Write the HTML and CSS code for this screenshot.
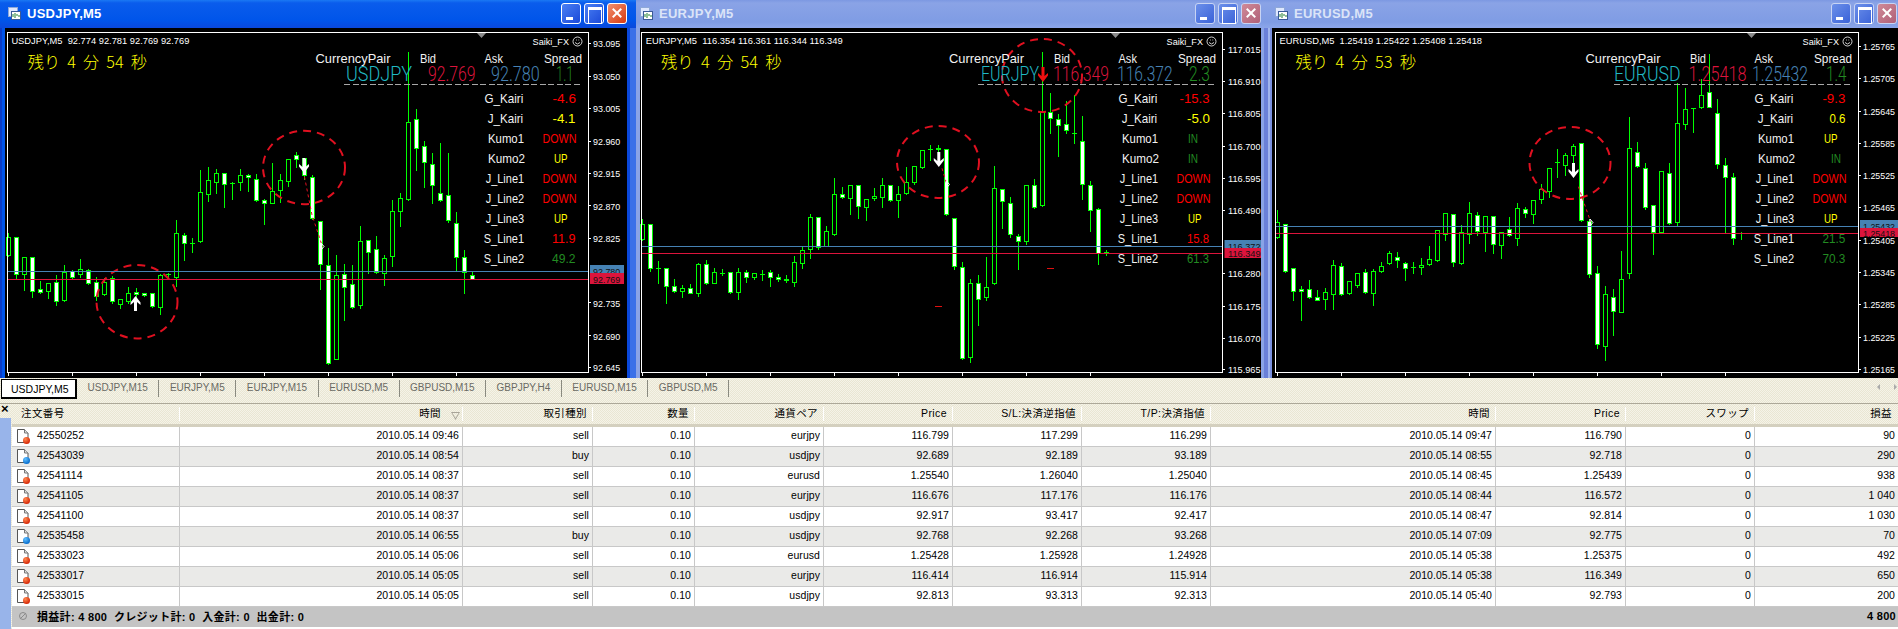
FILE: index.html
```html
<!DOCTYPE html>
<html lang="ja">
<head>
<meta charset="utf-8">
<title>MetaTrader charts</title>
<link rel="stylesheet" href="styles.css">
</head>
<body>
<main class="charts">
  <section class="win active w1">
    <header class="titlebar">
      <svg class="wicon" viewBox="0 0 13 13"><rect x="0.5" y="0.5" width="9" height="9" fill="#dfe8ff" stroke="#8fa8d8"/><rect x="3.5" y="4.5" width="9" height="8" fill="#fff" stroke="#3a5a98"/><path d="M5 10V7M7 11V6M9 9V7M11 10V8" stroke="#208030"/></svg>
      <span class="wtitle">USDJPY,M5</span>
      <div class="btns"><span class="btn bmin"></span><span class="btn bmax"></span><span class="btn bclose"></span></div>
    </header>
    <div class="chartwrap">
      <svg class="chart" viewBox="5 28 622 350">
        <g class="candles" data-chart="0"></g>
        <ellipse class="ring" cx="304" cy="167.5" rx="41" ry="36.7"/>
        <ellipse class="ring" cx="137" cy="301.7" rx="40.5" ry="36.7"/>
        <path class="trend" d="M304.5 176.7L312 215L322.5 246.7"/>
        <path class="marker" d="M321 243v7l3-3.5z"/>
        <path class="arrow" transform="translate(304 158)" d="M-1.5 0h3v9l3.5-3v2.500L0 15l-5-6.500v-2.500l3.500 3z"/>
        <path class="arrow" transform="translate(135.500 311) scale(1 -1)" d="M-1.500 0h3v9l3.500-3v2.500L0 15l-5-6.500v-2.500l3.500 3z"/>
        <path class="pline blue" d="M8 271.500H588"/>
        <path class="pline red" d="M8 279.500H588"/>
        <path class="frame" d="M7.500 372.500V32.500H588.500V372.500z"/>
        <path class="gtri" d="M477 33h9l-4.500 5z"/>
        <path class="frame" d="M588 43.500h3M588 76.500h3M588 108.500h3M588 141.500h3M588 173.500h3M588 205.500h3M588 238.500h3M588 302.500h3M588 335.500h3M588 367.500h3"/>
        <text class="hd" x="11.400" y="44" textLength="178" lengthAdjust="spacingAndGlyphs">USDJPY,M5  92.774 92.781 92.769 92.769</text>
        <text class="hd" x="532.600" y="45" textLength="36.400" lengthAdjust="spacingAndGlyphs">Saiki_FX</text>
        <g class="smile"><circle cx="577.500" cy="41.500" r="4.500"/><path d="M575 42.500q2.500 3 5 0M576 40h.8M578.400 40h.8"/></g>
        <text class="timer" x="27.800" y="68" textLength="119" lengthAdjust="spacingAndGlyphs">残り  4  分  54  秒</text>
        <text class="lb" x="315.500" y="63" textLength="75" lengthAdjust="spacingAndGlyphs">CurrencyPair</text>
        <text class="lb" x="420" y="63" textLength="16" lengthAdjust="spacingAndGlyphs">Bid</text>
        <text class="lb" x="484.500" y="63" textLength="18.400" lengthAdjust="spacingAndGlyphs">Ask</text>
        <text class="lb" x="544" y="63" textLength="38" lengthAdjust="spacingAndGlyphs">Spread</text>
        <text class="big cy" x="346" y="80.500" textLength="66" lengthAdjust="spacingAndGlyphs">USDJPY</text>
        <text class="big cr" x="428" y="80.500" textLength="47.500" lengthAdjust="spacingAndGlyphs">92.769</text>
        <text class="big sb" x="491" y="80.500" textLength="48.600" lengthAdjust="spacingAndGlyphs">92.780</text>
        <text class="big fg" x="556" y="80.500" textLength="17.500" lengthAdjust="spacingAndGlyphs">1.1</text>
        <path class="dash" d="M344 84.500H580"/>
        <text class="lb" x="484.500" y="103" textLength="38.800" lengthAdjust="spacingAndGlyphs">G_Kairi</text>
        <text class="lb" x="487.800" y="123" textLength="35.400" lengthAdjust="spacingAndGlyphs">J_Kairi</text>
        <text class="lb" x="488" y="143" textLength="36" lengthAdjust="spacingAndGlyphs">Kumo1</text>
        <text class="lb" x="488" y="163" textLength="37" lengthAdjust="spacingAndGlyphs">Kumo2</text>
        <text class="lb" x="485.700" y="183" textLength="38.400" lengthAdjust="spacingAndGlyphs">J_Line1</text>
        <text class="lb" x="485.700" y="203" textLength="38.400" lengthAdjust="spacingAndGlyphs">J_Line2</text>
        <text class="lb" x="485.700" y="223" textLength="38.400" lengthAdjust="spacingAndGlyphs">J_Line3</text>
        <text class="lb" x="483.700" y="243" textLength="40.400" lengthAdjust="spacingAndGlyphs">S_Line1</text>
        <text class="lb" x="483.700" y="263" textLength="40.400" lengthAdjust="spacingAndGlyphs">S_Line2</text>
        <text class="lb vr" x="552.500" y="103" textLength="23.500" lengthAdjust="spacingAndGlyphs">-4.6</text>
        <text class="lb vy" x="552.500" y="123" textLength="23" lengthAdjust="spacingAndGlyphs">-4.1</text>
        <text class="lb vr" x="542.500" y="143" textLength="34" lengthAdjust="spacingAndGlyphs">DOWN</text>
        <text class="lb vy" x="554" y="163" textLength="13.500" lengthAdjust="spacingAndGlyphs">UP</text>
        <text class="lb vr" x="542.500" y="183" textLength="34" lengthAdjust="spacingAndGlyphs">DOWN</text>
        <text class="lb vr" x="542.500" y="203" textLength="34" lengthAdjust="spacingAndGlyphs">DOWN</text>
        <text class="lb vy" x="554" y="223" textLength="13.500" lengthAdjust="spacingAndGlyphs">UP</text>
        <text class="lb vr" x="552" y="243" textLength="23.500" lengthAdjust="spacingAndGlyphs">11.9</text>
        <text class="lb vg" x="552" y="263" textLength="23.500" lengthAdjust="spacingAndGlyphs">49.2</text>
        <text class="ax" x="593" y="47" textLength="27.300" lengthAdjust="spacingAndGlyphs">93.095</text>
        <text class="ax" x="593" y="80" textLength="27.300" lengthAdjust="spacingAndGlyphs">93.050</text>
        <text class="ax" x="593" y="112" textLength="27.300" lengthAdjust="spacingAndGlyphs">93.005</text>
        <text class="ax" x="593" y="144.500" textLength="27.300" lengthAdjust="spacingAndGlyphs">92.960</text>
        <text class="ax" x="593" y="177" textLength="27.300" lengthAdjust="spacingAndGlyphs">92.915</text>
        <text class="ax" x="593" y="209.500" textLength="27.300" lengthAdjust="spacingAndGlyphs">92.870</text>
        <text class="ax" x="593" y="242" textLength="27.300" lengthAdjust="spacingAndGlyphs">92.825</text>
        <text class="ax" x="593" y="306.500" textLength="27.300" lengthAdjust="spacingAndGlyphs">92.735</text>
        <text class="ax" x="593" y="339.500" textLength="27.300" lengthAdjust="spacingAndGlyphs">92.690</text>
        <text class="ax" x="593" y="371" textLength="27.300" lengthAdjust="spacingAndGlyphs">92.645</text>
        <rect class="tagb" x="590" y="265" width="34" height="8"/>
        <text class="tagt" x="593" y="274.500" textLength="27.300" lengthAdjust="spacingAndGlyphs">92.780</text>
        <rect class="tagr" x="590" y="273" width="34" height="11"/>
        <text class="tagt" x="593" y="282.500" textLength="27.300" lengthAdjust="spacingAndGlyphs">92.769</text>
      </svg>
    </div>
  </section>

  <section class="win w2">
    <header class="titlebar">
      <svg class="wicon" viewBox="0 0 13 13"><rect x="0.5" y="0.5" width="9" height="9" fill="#dfe8ff" stroke="#8fa8d8"/><rect x="3.5" y="4.5" width="9" height="8" fill="#fff" stroke="#3a5a98"/><path d="M5 10V7M7 11V6M9 9V7M11 10V8" stroke="#208030"/></svg>
      <span class="wtitle">EURJPY,M5</span>
      <div class="btns"><span class="btn bmin"></span><span class="btn bmax"></span><span class="btn bclose"></span></div>
    </header>
    <div class="chartwrap">
      <svg class="chart" viewBox="6 28 621 350">
        <g class="candles" data-chart="1"></g>
        <ellipse class="ring" cx="304" cy="162" rx="41" ry="36"/>
        <ellipse class="ring" cx="408" cy="75.500" rx="40" ry="36.500"/>
        <path class="trend" d="M308 168.300L313 185"/>
        <path class="marker" d="M312.500 181v7l3-3.500z"/>
        <path class="arrow" transform="translate(304.800 152)" d="M-1.500 0h3v9l3.500-3v2.500L0 15l-5-6.500v-2.500l3.500 3z"/>
        <path class="arrow arrow-red" transform="translate(409 67)" d="M-1.500 0h3v9l3.500-3v2.500L0 15l-5-6.500v-2.500l3.500 3z"/>
        <path class="ticky" d="M412.500 268.500h7M301 306.500h7"/>
        <path class="pline blue" d="M8 246.500H588"/>
        <path class="pline red" d="M8 253.500H588"/>
        <path class="frame" d="M7.500 372.500V32.500H588.500V372.500z"/>
        <path class="gtri" d="M477 33h9l-4.500 5z"/>
        <path class="frame" d="M588 49.500h3M588 81.500h3M588 113.500h3M588 146.500h3M588 178.500h3M588 210.500h3M588 273.500h3M588 306.500h3M588 338.500h3M588 369.500h3"/>
        <text class="hd" x="11.700" y="44" textLength="197" lengthAdjust="spacingAndGlyphs">EURJPY,M5  116.354 116.361 116.344 116.349</text>
        <text class="hd" x="532.600" y="45" textLength="36.400" lengthAdjust="spacingAndGlyphs">Saiki_FX</text>
        <g class="smile"><circle cx="577.500" cy="41.500" r="4.500"/><path d="M575 42.500q2.500 3 5 0M576 40h.8M578.400 40h.8"/></g>
        <text class="timer" x="27" y="68" textLength="120.600" lengthAdjust="spacingAndGlyphs">残り  4  分  54  秒</text>
        <text class="lb" x="315" y="63" textLength="75" lengthAdjust="spacingAndGlyphs">CurrencyPair</text>
        <text class="lb" x="420" y="63" textLength="16" lengthAdjust="spacingAndGlyphs">Bid</text>
        <text class="lb" x="484.500" y="63" textLength="18.400" lengthAdjust="spacingAndGlyphs">Ask</text>
        <text class="lb" x="544" y="63" textLength="38" lengthAdjust="spacingAndGlyphs">Spread</text>
        <text class="big cy" x="347" y="80.500" textLength="58" lengthAdjust="spacingAndGlyphs">EURJPY</text>
        <text class="big cr" x="419" y="80.500" textLength="56" lengthAdjust="spacingAndGlyphs">116.349</text>
        <text class="big sb" x="483" y="80.500" textLength="55.600" lengthAdjust="spacingAndGlyphs">116.372</text>
        <text class="big fg" x="555" y="80.500" textLength="21" lengthAdjust="spacingAndGlyphs">2.3</text>
        <path class="dash" d="M344 84.500H580"/>
        <text class="lb" x="484.500" y="103" textLength="38.800" lengthAdjust="spacingAndGlyphs">G_Kairi</text>
        <text class="lb" x="487.800" y="123" textLength="35.400" lengthAdjust="spacingAndGlyphs">J_Kairi</text>
        <text class="lb" x="488" y="143" textLength="36" lengthAdjust="spacingAndGlyphs">Kumo1</text>
        <text class="lb" x="488" y="163" textLength="37" lengthAdjust="spacingAndGlyphs">Kumo2</text>
        <text class="lb" x="485.700" y="183" textLength="38.400" lengthAdjust="spacingAndGlyphs">J_Line1</text>
        <text class="lb" x="485.700" y="203" textLength="38.400" lengthAdjust="spacingAndGlyphs">J_Line2</text>
        <text class="lb" x="485.700" y="223" textLength="38.400" lengthAdjust="spacingAndGlyphs">J_Line3</text>
        <text class="lb" x="483.700" y="243" textLength="40.400" lengthAdjust="spacingAndGlyphs">S_Line1</text>
        <text class="lb" x="483.700" y="263" textLength="40.400" lengthAdjust="spacingAndGlyphs">S_Line2</text>
        <text class="lb vr" x="545.600" y="103" textLength="30" lengthAdjust="spacingAndGlyphs">-15.3</text>
        <text class="lb vy" x="553" y="123" textLength="23" lengthAdjust="spacingAndGlyphs">-5.0</text>
        <text class="lb vg" x="554" y="143" textLength="10" lengthAdjust="spacingAndGlyphs">IN</text>
        <text class="lb vg" x="554" y="163" textLength="10" lengthAdjust="spacingAndGlyphs">IN</text>
        <text class="lb vr" x="542.500" y="183" textLength="34" lengthAdjust="spacingAndGlyphs">DOWN</text>
        <text class="lb vr" x="542.500" y="203" textLength="34" lengthAdjust="spacingAndGlyphs">DOWN</text>
        <text class="lb vy" x="554" y="223" textLength="13.500" lengthAdjust="spacingAndGlyphs">UP</text>
        <text class="lb vr" x="553" y="243" textLength="22" lengthAdjust="spacingAndGlyphs">15.8</text>
        <text class="lb vg" x="553" y="263" textLength="22" lengthAdjust="spacingAndGlyphs">61.3</text>
        <text class="ax" x="594" y="53" textLength="32.600" lengthAdjust="spacingAndGlyphs">117.015</text>
        <text class="ax" x="594" y="85" textLength="32.600" lengthAdjust="spacingAndGlyphs">116.910</text>
        <text class="ax" x="594" y="117" textLength="32.600" lengthAdjust="spacingAndGlyphs">116.805</text>
        <text class="ax" x="594" y="149.500" textLength="32.600" lengthAdjust="spacingAndGlyphs">116.700</text>
        <text class="ax" x="594" y="181.500" textLength="32.600" lengthAdjust="spacingAndGlyphs">116.595</text>
        <text class="ax" x="594" y="213.500" textLength="32.600" lengthAdjust="spacingAndGlyphs">116.490</text>
        <text class="ax" x="594" y="245.500" textLength="32.600" lengthAdjust="spacingAndGlyphs">116.385</text>
        <text class="ax" x="594" y="276.500" textLength="32.600" lengthAdjust="spacingAndGlyphs">116.280</text>
        <text class="ax" x="594" y="309.500" textLength="32.600" lengthAdjust="spacingAndGlyphs">116.175</text>
        <text class="ax" x="594" y="341.500" textLength="32.600" lengthAdjust="spacingAndGlyphs">116.070</text>
        <text class="ax" x="594" y="372.500" textLength="32.600" lengthAdjust="spacingAndGlyphs">115.965</text>
        <rect class="tagb" x="590.500" y="240" width="36.500" height="8"/>
        <text class="tagt" x="594" y="249.500" textLength="32.600" lengthAdjust="spacingAndGlyphs">116.372</text>
        <rect class="tagr" x="590.500" y="248" width="36.500" height="10"/>
        <text class="tagt" x="594" y="256.500" textLength="32.600" lengthAdjust="spacingAndGlyphs">116.349</text>
      </svg>
    </div>
  </section>

  <section class="win w3">
    <header class="titlebar">
      <svg class="wicon" viewBox="0 0 13 13"><rect x="0.5" y="0.5" width="9" height="9" fill="#dfe8ff" stroke="#8fa8d8"/><rect x="3.5" y="4.5" width="9" height="8" fill="#fff" stroke="#3a5a98"/><path d="M5 10V7M7 11V6M9 9V7M11 10V8" stroke="#208030"/></svg>
      <span class="wtitle">EURUSD,M5</span>
      <div class="btns"><span class="btn bmin"></span><span class="btn bmax"></span><span class="btn bclose"></span></div>
    </header>
    <div class="chartwrap">
      <svg class="chart" viewBox="2 28 626 350">
        <g class="candles" data-chart="2"></g>
        <ellipse class="ring" cx="300" cy="163" rx="40.500" ry="36"/>
        <path class="trend" d="M308.400 186.700L320.600 221.700"/>
        <path class="marker" d="M320 219v7l3-3.500z"/>
        <path class="arrow" transform="translate(303.500 163)" d="M-1.500 0h3v9l3.500-3v2.500L0 15l-5-6.500v-2.500l3.500 3z"/>
        <path class="pline blue" d="M6 226.500H588"/>
        <path class="pline red" d="M6 233.500H588"/>
        <path class="frame" d="M5.500 372.500V32.500H588.500V372.500z"/>
        <path class="gtri" d="M477 33h9l-4.500 5z"/>
        <path class="frame" d="M588 46.500h3M588 78.500h3M588 111.500h3M588 143.500h3M588 175.500h3M588 207.500h3M588 240.500h3M588 272.500h3M588 304.500h3M588 337.500h3M588 369.500h3"/>
        <text class="hd" x="9.600" y="44" textLength="202.400" lengthAdjust="spacingAndGlyphs">EURUSD,M5  1.25419 1.25422 1.25408 1.25418</text>
        <text class="hd" x="532.600" y="45" textLength="36.400" lengthAdjust="spacingAndGlyphs">Saiki_FX</text>
        <g class="smile"><circle cx="577.500" cy="41.500" r="4.500"/><path d="M575 42.500q2.500 3 5 0M576 40h.8M578.400 40h.8"/></g>
        <text class="timer" x="25.500" y="68" textLength="120.500" lengthAdjust="spacingAndGlyphs">残り  4  分  53  秒</text>
        <text class="lb" x="315.500" y="63" textLength="75" lengthAdjust="spacingAndGlyphs">CurrencyPair</text>
        <text class="lb" x="420" y="63" textLength="16" lengthAdjust="spacingAndGlyphs">Bid</text>
        <text class="lb" x="484.500" y="63" textLength="18.400" lengthAdjust="spacingAndGlyphs">Ask</text>
        <text class="lb" x="544" y="63" textLength="38" lengthAdjust="spacingAndGlyphs">Spread</text>
        <text class="big cy" x="344" y="80.500" textLength="66.600" lengthAdjust="spacingAndGlyphs">EURUSD</text>
        <text class="big cr" x="418.600" y="80.500" textLength="58" lengthAdjust="spacingAndGlyphs">1.25418</text>
        <text class="big sb" x="482" y="80.500" textLength="56" lengthAdjust="spacingAndGlyphs">1.25432</text>
        <text class="big fg" x="556" y="80.500" textLength="20.500" lengthAdjust="spacingAndGlyphs">1.4</text>
        <path class="dash" d="M344 84.500H580"/>
        <text class="lb" x="484.500" y="103" textLength="38.800" lengthAdjust="spacingAndGlyphs">G_Kairi</text>
        <text class="lb" x="487.800" y="123" textLength="35.400" lengthAdjust="spacingAndGlyphs">J_Kairi</text>
        <text class="lb" x="488" y="143" textLength="36" lengthAdjust="spacingAndGlyphs">Kumo1</text>
        <text class="lb" x="488" y="163" textLength="37" lengthAdjust="spacingAndGlyphs">Kumo2</text>
        <text class="lb" x="485.700" y="183" textLength="38.400" lengthAdjust="spacingAndGlyphs">J_Line1</text>
        <text class="lb" x="485.700" y="203" textLength="38.400" lengthAdjust="spacingAndGlyphs">J_Line2</text>
        <text class="lb" x="485.700" y="223" textLength="38.400" lengthAdjust="spacingAndGlyphs">J_Line3</text>
        <text class="lb" x="483.700" y="243" textLength="40.400" lengthAdjust="spacingAndGlyphs">S_Line1</text>
        <text class="lb" x="483.700" y="263" textLength="40.400" lengthAdjust="spacingAndGlyphs">S_Line2</text>
        <text class="lb vr" x="552.400" y="103" textLength="23" lengthAdjust="spacingAndGlyphs">-9.3</text>
        <text class="lb vy" x="559.400" y="123" textLength="16" lengthAdjust="spacingAndGlyphs">0.6</text>
        <text class="lb vy" x="554" y="143" textLength="13.500" lengthAdjust="spacingAndGlyphs">UP</text>
        <text class="lb vg" x="561" y="163" textLength="10" lengthAdjust="spacingAndGlyphs">IN</text>
        <text class="lb vr" x="542.500" y="183" textLength="34" lengthAdjust="spacingAndGlyphs">DOWN</text>
        <text class="lb vr" x="542.500" y="203" textLength="34" lengthAdjust="spacingAndGlyphs">DOWN</text>
        <text class="lb vy" x="554" y="223" textLength="13.500" lengthAdjust="spacingAndGlyphs">UP</text>
        <text class="lb vg" x="552.400" y="243" textLength="23" lengthAdjust="spacingAndGlyphs">21.5</text>
        <text class="lb vg" x="552.400" y="263" textLength="23" lengthAdjust="spacingAndGlyphs">70.3</text>
        <text class="ax" x="593" y="50" textLength="32" lengthAdjust="spacingAndGlyphs">1.25765</text>
        <text class="ax" x="593" y="82" textLength="32" lengthAdjust="spacingAndGlyphs">1.25705</text>
        <text class="ax" x="593" y="114.500" textLength="32" lengthAdjust="spacingAndGlyphs">1.25645</text>
        <text class="ax" x="593" y="146.500" textLength="32" lengthAdjust="spacingAndGlyphs">1.25585</text>
        <text class="ax" x="593" y="178.500" textLength="32" lengthAdjust="spacingAndGlyphs">1.25525</text>
        <text class="ax" x="593" y="210.500" textLength="32" lengthAdjust="spacingAndGlyphs">1.25465</text>
        <text class="ax" x="593" y="243.500" textLength="32" lengthAdjust="spacingAndGlyphs">1.25405</text>
        <text class="ax" x="593" y="275.500" textLength="32" lengthAdjust="spacingAndGlyphs">1.25345</text>
        <text class="ax" x="593" y="307.500" textLength="32" lengthAdjust="spacingAndGlyphs">1.25285</text>
        <text class="ax" x="593" y="340.500" textLength="32" lengthAdjust="spacingAndGlyphs">1.25225</text>
        <text class="ax" x="593" y="372.500" textLength="32" lengthAdjust="spacingAndGlyphs">1.25165</text>
        <rect class="tagb" x="590" y="220" width="38" height="8"/>
        <text class="tagt" x="593" y="229.500" textLength="32" lengthAdjust="spacingAndGlyphs">1.25432</text>
        <rect class="tagr" x="590" y="228" width="38" height="9"/>
        <text class="tagt" x="593" y="236.500" textLength="32" lengthAdjust="spacingAndGlyphs">1.25418</text>
      </svg>
    </div>
  </section>
</main>

<nav class="tabs">
  <span class="tab on">USDJPY,M5</span>
  <span class="tab">USDJPY,M15</span>
  <span class="tab">EURJPY,M5</span>
  <span class="tab">EURJPY,M15</span>
  <span class="tab">EURUSD,M5</span>
  <span class="tab">GBPUSD,M15</span>
  <span class="tab">GBPJPY,H4</span>
  <span class="tab">EURUSD,M15</span>
  <span class="tab">GBPUSD,M5</span>
  <span class="scroll"><i class="tl"></i><i class="tr"></i></span>
</nav>

<svg class="defs" width="0" height="0">
  <symbol id="doc" viewBox="0 0 14 16">
    <path d="M1.500 1.500h7l3.500 3.500v9.500h-10.500z" fill="#fff" stroke="#555"/>
    <path d="M8.500 1.500v3.500h3.500" fill="#ddd" stroke="#777"/>
  </symbol>
</svg>

<div class="terminal">
  <aside class="side"><b class="closex">×</b><div class="sidefill"></div></aside>
  <table class="orders">
    <colgroup><col class="c1"><col class="c2"><col class="c3"><col class="c4"><col class="c5"><col class="c6"><col class="c7"><col class="c8"><col class="c9"><col class="c10"><col class="c11"><col class="c12"></colgroup>
    <thead>
      <tr><th class="first">注文番号</th><th class="sorted">時間<i class="sort"></i></th><th>取引種別</th><th>数量</th><th>通貨ペア</th><th>Price</th><th>S/L:決済逆指値</th><th>T/P:決済指値</th><th>時間</th><th>Price</th><th>スワップ</th><th>損益</th></tr>
    </thead>
    <tbody>
      <tr><td class="id"><svg class="dic"><use href="#doc"/></svg><i class="ball sell"></i>42550252</td><td>2010.05.14 09:46</td><td>sell</td><td>0.10</td><td>eurjpy</td><td>116.799</td><td>117.299</td><td>116.299</td><td>2010.05.14 09:47</td><td>116.790</td><td>0</td><td>90</td></tr>
      <tr><td class="id"><svg class="dic"><use href="#doc"/></svg><i class="ball buy"></i>42543039</td><td>2010.05.14 08:54</td><td>buy</td><td>0.10</td><td>usdjpy</td><td>92.689</td><td>92.189</td><td>93.189</td><td>2010.05.14 08:55</td><td>92.718</td><td>0</td><td>290</td></tr>
      <tr><td class="id"><svg class="dic"><use href="#doc"/></svg><i class="ball sell"></i>42541114</td><td>2010.05.14 08:37</td><td>sell</td><td>0.10</td><td>eurusd</td><td>1.25540</td><td>1.26040</td><td>1.25040</td><td>2010.05.14 08:45</td><td>1.25439</td><td>0</td><td>938</td></tr>
      <tr><td class="id"><svg class="dic"><use href="#doc"/></svg><i class="ball sell"></i>42541105</td><td>2010.05.14 08:37</td><td>sell</td><td>0.10</td><td>eurjpy</td><td>116.676</td><td>117.176</td><td>116.176</td><td>2010.05.14 08:44</td><td>116.572</td><td>0</td><td>1 040</td></tr>
      <tr><td class="id"><svg class="dic"><use href="#doc"/></svg><i class="ball sell"></i>42541100</td><td>2010.05.14 08:37</td><td>sell</td><td>0.10</td><td>usdjpy</td><td>92.917</td><td>93.417</td><td>92.417</td><td>2010.05.14 08:47</td><td>92.814</td><td>0</td><td>1 030</td></tr>
      <tr><td class="id"><svg class="dic"><use href="#doc"/></svg><i class="ball buy"></i>42535458</td><td>2010.05.14 06:55</td><td>buy</td><td>0.10</td><td>usdjpy</td><td>92.768</td><td>92.268</td><td>93.268</td><td>2010.05.14 07:09</td><td>92.775</td><td>0</td><td>70</td></tr>
      <tr><td class="id"><svg class="dic"><use href="#doc"/></svg><i class="ball sell"></i>42533023</td><td>2010.05.14 05:06</td><td>sell</td><td>0.10</td><td>eurusd</td><td>1.25428</td><td>1.25928</td><td>1.24928</td><td>2010.05.14 05:38</td><td>1.25375</td><td>0</td><td>492</td></tr>
      <tr><td class="id"><svg class="dic"><use href="#doc"/></svg><i class="ball sell"></i>42533017</td><td>2010.05.14 05:05</td><td>sell</td><td>0.10</td><td>eurjpy</td><td>116.414</td><td>116.914</td><td>115.914</td><td>2010.05.14 05:38</td><td>116.349</td><td>0</td><td>650</td></tr>
      <tr><td class="id"><svg class="dic"><use href="#doc"/></svg><i class="ball sell"></i>42533015</td><td>2010.05.14 05:05</td><td>sell</td><td>0.10</td><td>usdjpy</td><td>92.813</td><td>93.313</td><td>92.313</td><td>2010.05.14 05:40</td><td>92.793</td><td>0</td><td>200</td></tr>
    </tbody>
    <tfoot>
      <tr><td colspan="11" class="sum"><i class="noicon"></i>損益計: 4 800&nbsp;&nbsp;クレジット計: 0&nbsp;&nbsp;入金計: 0&nbsp;&nbsp;出金計: 0</td><td class="total">4 800</td></tr>
    </tfoot>
  </table>
</div>
<script src="candles.js"></script>
</body>
</html>
```
FILE: styles.css
```css
* { box-sizing: border-box; }
html, body { margin: 0; padding: 0; background: #fff; }
body { width: 1898px; height: 629px; overflow: hidden; font-family: "Liberation Sans", "Noto Sans CJK JP", sans-serif; }

.charts { display: flex; height: 378px; }
.win { display: flex; flex-direction: column; height: 378px; overflow: hidden; }
.w1 { width: 636px; }
.w2 { width: 630px; }
.w3 { width: 632px; }

.titlebar { height: 28px; display: flex; align-items: center; background: linear-gradient(#7c98e2 0, #8aa3e6 3px, #7f9ce4 22px, #8ca6ea 28px); }
.active .titlebar { background: linear-gradient(#1a78f4 0, #0a5cec 3px, #0055ea 20px, #0a48dc 28px); }
.w1 .titlebar { padding: 0 9px 2px 8px; }
.w2 .titlebar { padding: 0 5px 2px 4px; }
.w3 .titlebar { padding: 0 1px 2px 9px; }
.wicon { width: 13px; height: 13px; margin-right: 6px; flex: none; }
.wtitle { font-size: 13px; font-weight: 700; color: #dbe4f8; letter-spacing: .02em; }
.active .wtitle { color: #fff; }
.btns { margin-left: auto; display: flex; gap: 3px; }
.btn { position: relative; display: block; width: 20px; height: 21px; border: 1px solid #c8d4f4; border-radius: 3px; background: linear-gradient(135deg, #6c90ea, #3a62d8); }
.active .btn { border-color: #fff; background: linear-gradient(135deg, #4a80f4, #1a48d8); }
.bclose { background: linear-gradient(135deg, #d08a98, #b06078); }
.active .bclose { background: linear-gradient(135deg, #f09070, #d83a10); }
.bmin::after { content: ""; position: absolute; left: 4px; bottom: 3px; width: 7px; height: 3px; background: #fff; }
.bmax::after { content: ""; position: absolute; left: 3px; top: 3px; width: 12px; height: 13px; border: 1px solid #fff; border-top-width: 3px; }
.bclose::before, .bclose::after { content: ""; position: absolute; left: 3px; top: 8px; width: 12px; height: 2px; background: #fff; transform: rotate(45deg); }
.bclose::after { transform: rotate(-45deg); }

.chartwrap { flex: 1; display: flex; background: #000; }
.w1 .chartwrap { background: linear-gradient(90deg, #0a3cc8 0 2px, #0055ea 2px 5px, #000 5px 627px, #0a48dc 627px 630px, #3a70e8 630px 636px); padding-left: 5px; }
.w2 .chartwrap { background: linear-gradient(90deg, #8aa3e6 0 4px, #000 4px 625px, #8aa3e6 625px 628px, #6a80d8 628px 630px); padding-left: 4px; }
.w3 .chartwrap { background: linear-gradient(90deg, #6a80d8 0 2px, #a0b4ec 2px 4px, #7a90de 4px 6px, #000 6px); padding-left: 6px; }
.chart { display: block; height: 350px; background: #000; flex: none; font-family: "Liberation Sans", "Noto Sans CJK JP", sans-serif; }
.w1 .chart { width: 622px; }
.w2 .chart { width: 621px; }
.w3 .chart { width: 626px; }

.wick { stroke: #00ff00; fill: none; stroke-width: 1; shape-rendering: crispEdges; }
.up { stroke: #00ff00; fill: #000; stroke-width: 1; shape-rendering: crispEdges; }
.dn { stroke: #00ff00; fill: #fff; stroke-width: 1; shape-rendering: crispEdges; }
.tick { stroke: #fff; stroke-width: 1; shape-rendering: crispEdges; fill: none; }
.frame { stroke: #fff; stroke-width: 1; fill: none; shape-rendering: crispEdges; }
.ring { fill: none; stroke: #e01020; stroke-width: 2; stroke-dasharray: 8 6; }
.trend { fill: none; stroke: #e01020; stroke-width: 1; stroke-dasharray: 3 3; }
.marker { fill: none; stroke: #fff; stroke-width: 1; }
.arrow { fill: #fff; }
.arrow-red { fill: #f01010; }
.ticky { stroke: #e01010; stroke-width: 1; shape-rendering: crispEdges; fill: none; }
.pline { stroke-width: 1; shape-rendering: crispEdges; fill: none; }
.blue { stroke: #4682b4; }
.red { stroke: #dc143c; }
.gtri { fill: #8a8a8a; }
.hd { fill: #fff; font-size: 9.5px; white-space: pre; }
.smile { fill: none; stroke: #fff; stroke-width: .8; }
.timer { fill: #ffff00; font-size: 16px; white-space: pre; font-family: "Noto Sans CJK JP", sans-serif; font-weight: 300; }
.lb { fill: #f2f2f2; font-size: 13px; }
.big { font-size: 20px; font-family: Roboto, "Liberation Sans", sans-serif; font-weight: 300; }
.cy { fill: #20b8c4; }
.cr { fill: #dc143c; }
.sb { fill: #4682b4; }
.fg { fill: #228b22; }
.dash { stroke: #a8a8a8; stroke-width: 1; stroke-dasharray: 6 2.5; fill: none; shape-rendering: crispEdges; }
.vr { fill: #ff0000; }
.vy { fill: #ffff00; }
.vg { fill: #228b22; }
.ax { fill: #fff; font-size: 9px; }
.tagb { fill: #4682b4; }
.tagr { fill: #dc143c; }
.tagt { fill: #111; font-size: 9px; }

.tabs, .side, .orders th { background-color: #ece9d8; background-image: repeating-conic-gradient(#e9e6d3 0 25%, #f5f3e8 0 50%); background-size: 2px 2px; }
.tabs { display: flex; align-items: flex-start; height: 25px; padding: 1px 0 0 1px; font-size: 10px; color: #6a6a64; position: relative; }
.tab { padding: 0 10.5px; border-right: 1px solid #8a8a80; margin-top: 1px; height: 17px; line-height: 16px; }
.tab.on { width: 76px; height: 20px; margin-top: 0; line-height: 19px; padding: 0 0 0 9px; color: #000; background: #fff; border: 1px solid #000; border-width: 1px 2px 2px 1px; font-size: 10.5px; }
.scroll { margin-left: auto; display: flex; gap: 14px; padding: 5px 1px 0 0; }
.scroll i { display: block; width: 0; height: 0; border: 3px solid transparent; }
.tl { border-right-color: #aaa !important; border-left-width: 0 !important; }
.tr { border-left-color: #aaa !important; border-right-width: 0 !important; }

.defs { position: absolute; }

.terminal { display: flex; height: 226px; background: #fff; border-top: 1px solid #aca899; }
.side { width: 12px; flex: none; display: flex; flex-direction: column; }
.closex { height: 14px; line-height: 10px; font-size: 13px; padding-left: 1px; color: #000; }
.sidefill { flex: 1; background: #98b4ea; margin-right: 1px; }
.orders { width: 1886px; table-layout: fixed; border-collapse: separate; border-spacing: 0; font-size: 10.5px; color: #000; align-self: flex-start; }
.c1 { width: 168px; }
.c2 { width: 283px; }
.c3 { width: 130px; }
.c4 { width: 102px; }
.c5 { width: 129px; }
.c6 { width: 129px; }
.c7 { width: 129px; }
.c8 { width: 129px; }
.c9 { width: 285px; }
.c10 { width: 130px; }
.c11 { width: 129px; }
.c12 { width: 143px; }
.orders th { position: relative; height: 23px; padding: 0 6px 3px 0; text-align: right; font-weight: 400; font-size: 10.5px; letter-spacing: .4px; border-bottom: 3px solid #d4d0bf; white-space: nowrap; }
.orders th:not(:last-child)::after { content: ""; position: absolute; right: 0; top: 3px; bottom: 3px; width: 1px; background: #fff; }
.orders th.first { text-align: left; padding-left: 9px; }
.orders th.sorted { padding-right: 22px; }
.sort { position: absolute; right: 3px; top: 8px; width: 9px; height: 8px; background: #a8a498; clip-path: polygon(0 0, 100% 0, 50% 100%, 0 0, 15% 12%, 50% 76%, 85% 12%, 15% 12%); }
.orders td { height: 20px; padding: 0 3px 3px 0; text-align: right; border-bottom: 1px solid #c8c8c8; border-right: 1px solid #c8c8c8; white-space: nowrap; letter-spacing: .05px; }
.orders tbody tr:nth-child(even) td { background: #eaeae8; }
.orders td:last-child { border-right: 0; }
.orders td.id { position: relative; text-align: left; padding-left: 25px; }
.dic { position: absolute; left: 4px; top: 1px; width: 14px; height: 16px; }
.ball { position: absolute; left: 11px; top: 10px; width: 7px; height: 7px; border-radius: 50%; }
.sell { background: radial-gradient(circle at 35% 30%, #ff8a50, #d82a08 70%); }
.buy { background: radial-gradient(circle at 35% 30%, #60c0ff, #0a70d0 70%); }
.orders tfoot td { height: 20px; border: 0; background: #c4c4c4; font-weight: 700; font-size: 11px; letter-spacing: .3px; padding: 0 2px 3px 0; }
.orders td.sum { position: relative; text-align: left; padding-left: 25px; }
.noicon { position: absolute; left: 7px; top: 5px; width: 8px; height: 8px; border-radius: 50%; border: 1px solid #8a8a8a; background: linear-gradient(135deg, transparent 44%, #8a8a8a 44% 56%, transparent 56%); }
```
FILE: candles.js
```js
// Candle series: [top, bottom, high, low, filled], y values in units of 1/3 px from y=130.
var SERIES = [
  { base: 8, data: [
    [322,375,305,377,0],[322,433,322,445,1],[382,433,382,480,0],[382,482,382,500,1],[476,487,450,490,1],[458,482,458,505,0],[457,514,432,525,1],[427,510,402,512,0],[422,442,418,445,1],[418,433,385,440,0],
    [420,460,415,462,1],[457,497,438,510,1],[455,493,440,495,0],[445,512,435,518,1],[508,523,508,535,0],[490,512,468,520,0],[487,493,472,500,1],[490,496,488,497,1],[490,528,487,530,1],[436,532,430,552,0],
    [433,433,425,445,0],[310,442,267,468,0],[314,340,307,390,1],[338,338,320,365,0],[187,334,118,336,0],[149,193,108,213,0],[130,157,114,190,0],[130,163,130,230,1],[160,160,154,207,0],[136,157,115,180,0],
    [134,142,130,183,1],[148,211,130,213,1],[211,220,205,282,1],[184,218,96,220,0],[151,181,130,215,0],[88,154,85,168,0],[76,88,62,110,1],[84,136,80,148,1],[142,265,132,267,1],[274,403,274,478,1],
    [404,700,350,703,1],[436,687,372,688,0],[432,472,400,570,1],[462,532,403,534,1],[334,526,285,535,0],[330,365,327,428,1],[358,427,315,430,1],[385,430,372,465,0],[244,377,207,408,0],[205,244,185,287,0],
    [-24,208,-237,210,0],[-32,55,-65,120,1],[48,97,30,170,1],[103,166,65,220,1],[190,211,37,213,1],[196,271,65,275,1],[280,380,243,420,1],[380,427,357,488,1],[436,446,420,448,1]
  ]},
  { base: 8.4, data: [
    [283,328,265,330,0],[283,415,283,423,1],[415,415,390,458,0],[415,469,415,520,1],[469,484,445,485,1],[475,484,462,500,0],[475,488,460,490,1],[403,488,396,498,0],[403,460,388,462,1],[427,458,412,460,0],
    [430,430,415,435,0],[427,485,425,488,1],[427,485,412,506,0],[425,442,418,455,1],[430,440,426,447,0],[431,431,418,450,0],[427,442,418,467,1],[441,446,430,453,1],[447,451,432,455,1],[397,455,375,468,0],
    [361,400,348,413,0],[262,358,250,385,0],[262,350,262,358,1],[304,347,285,349,0],[193,311,142,314,0],[193,202,168,204,1],[166,205,166,252,0],[166,229,166,265,1],[208,230,205,270,0],[197,205,170,210,0],
    [166,200,142,230,0],[166,211,165,213,1],[193,211,165,260,0],[155,190,108,192,0],[109,155,105,161,0],[61,112,56,114,0],[57,57,43,90,0],[54,58,42,90,1],[58,252,55,254,1],[263,408,262,418,1],
    [410,685,393,687,1],[460,682,443,695,0],[460,507,433,585,1],[472,502,378,510,0],[175,460,105,462,0],[178,214,175,295,1],[218,313,198,320,1],[317,333,310,416,1],[166,334,162,342,0],[166,230,143,233,1],
    [-57,224,-237,227,0],[-55,-37,-115,8,1],[-33,-14,-50,77,1],[-17,1,-90,8,1],[10,10,-107,40,0],[34,162,-45,207,1],[164,239,150,303,1],[238,370,232,402,1],[367,367,357,376,0]
  ]},
  { base: 6.5, data: [
    [277,322,237,325,0],[283,424,283,425,1],[415,484,415,510,1],[476,482,465,570,1],[476,502,448,504,1],[502,509,478,510,1],[487,508,472,537,0],[406,492,388,537,0],[409,492,396,496,1],[454,490,450,492,0],
    [430,464,430,470,0],[427,487,415,489,1],[424,490,415,525,0],[409,422,393,425,0],[370,400,360,403,0],[380,391,363,410,1],[398,415,392,450,1],[410,410,393,428,0],[406,412,382,432,0],[388,403,346,405,0],
    [301,391,300,393,0],[250,312,247,330,0],[253,397,253,407,1],[306,398,282,403,0],[248,313,213,338,0],[254,302,243,315,1],[259,305,258,362,0],[259,343,258,368,1],[307,346,305,384,0],[296,315,258,317,1],
    [235,323,216,344,0],[236,250,228,260,1],[211,253,211,280,0],[178,206,160,218,0],[115,183,113,200,0],[97,97,55,140,0],[76,106,67,135,0],[48,76,40,100,0],[39,270,37,272,1],[272,431,265,442,1],
    [430,643,405,655,1],[493,647,465,690,0],[502,544,475,615,1],[448,545,360,547,0],[55,428,-42,443,0],[67,109,33,111,1],[115,232,96,238,1],[225,305,222,372,1],[124,305,124,307,0],[130,280,97,283,1],
    [-20,275,-145,285,0],[-63,-17,-128,-3,0],[-65,-65,-70,5,0],[-104,-70,-155,-65,0],[-115,-70,-230,-68,1],[-50,103,-95,113,1],[105,140,82,310,1],[142,325,127,341,1],[310,310,303,327,0]
  ]}
];

var NS = "http://www.w3.org/2000/svg";

function yOf(v) {
  return Math.round(130 + v / 3) + 0.5;
}

function add(parent, name, attrs) {
  var el = document.createElementNS(NS, name);
  Object.keys(attrs).forEach(function (k) { el.setAttribute(k, attrs[k]); });
  parent.appendChild(el);
}

document.querySelectorAll(".candles").forEach(function (group) {
  var series = SERIES[Number(group.getAttribute("data-chart"))];
  var wicks = "";
  var ticks = "";
  series.data.forEach(function (c, i) {
    var x = Math.round(series.base + 8 * i) + 0.5;
    wicks += "M" + x + " " + yOf(c[2]) + "V" + yOf(c[3]);
    if (i % 8 === 0) {
      ticks += "M" + x + " 372V376";
    }
  });
  add(group, "path", { "class": "wick", d: wicks });
  add(group, "path", { "class": "tick", d: ticks });
  series.data.forEach(function (c, i) {
    var x = Math.round(series.base + 8 * i) + 0.5;
    var top = yOf(c[0]);
    var bottom = yOf(c[1]);
    if (c[0] === c[1]) {
      add(group, "path", { "class": "wick", d: "M" + (x - 2.5) + " " + top + "h5" });
    } else {
      add(group, "rect", {
        "class": c[4] ? "dn" : "up",
        x: x - 2, y: top, width: 4, height: bottom - top
      });
    }
  });
});
```
